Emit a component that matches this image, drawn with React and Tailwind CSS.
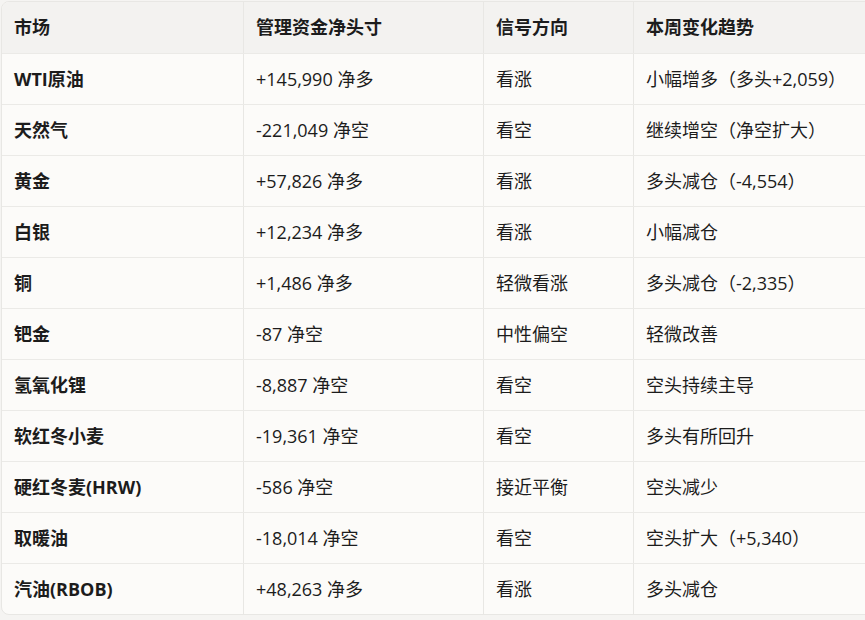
import React from "react";

const rows = [
  ["WTI原油", "+145,990 净多", "看涨", "小幅增多（多头+2,059）"],
  ["天然气", "-221,049 净空", "看空", "继续增空（净空扩大）"],
  ["黄金", "+57,826 净多", "看涨", "多头减仓（-4,554）"],
  ["白银", "+12,234 净多", "看涨", "小幅减仓"],
  ["铜", "+1,486 净多", "轻微看涨", "多头减仓（-2,335）"],
  ["钯金", "-87 净空", "中性偏空", "轻微改善"],
  ["氢氧化锂", "-8,887 净空", "看空", "空头持续主导"],
  ["软红冬小麦", "-19,361 净空", "看空", "多头有所回升"],
  ["硬红冬麦(HRW)", "-586 净空", "接近平衡", "空头减少"],
  ["取暖油", "-18,014 净空", "看空", "空头扩大（+5,340）"],
  ["汽油(RBOB)", "+48,263 净多", "看涨", "多头减仓"],
];

const headers = ["市场", "管理资金净头寸", "信号方向", "本周变化趋势"];

const cols = "grid grid-cols-[241px_240px_150px_1fr]";

export default function App() {
  return (
    <div
      className="w-[865px] h-[620px] overflow-hidden bg-[#f5f4f2] pt-px pl-px text-[#1c1c1c]"
      style={{ fontFamily: '"Open Sans", "Noto Sans CJK SC", sans-serif' }}
    >
      <div className="w-[900px] rounded-lg border border-[#e8e7e4] bg-[#fcfbf9] overflow-hidden">
        <div className={`${cols} h-[51px] bg-[#f3f2f0] font-bold text-[18px]`}>
          {headers.map((h, i) => (
            <div
              key={i}
              className={`flex items-center pl-3 ${i > 0 ? "border-l border-[#e8e7e4]" : ""}`}
            >
              {h}
            </div>
          ))}
        </div>
        {rows.map((r, ri) => (
          <div key={ri} className={`${cols} h-[51px] border-t border-[#ebeae7] text-[18px]`}>
            {r.map((c, i) => (
              <div
                key={i}
                className={`flex items-center pl-3 ${i === 0 ? "font-bold" : ""} ${i > 0 ? "border-l border-[#e8e7e4]" : ""}`}
              >
                {c}
              </div>
            ))}
          </div>
        ))}
      </div>
    </div>
  );
}
